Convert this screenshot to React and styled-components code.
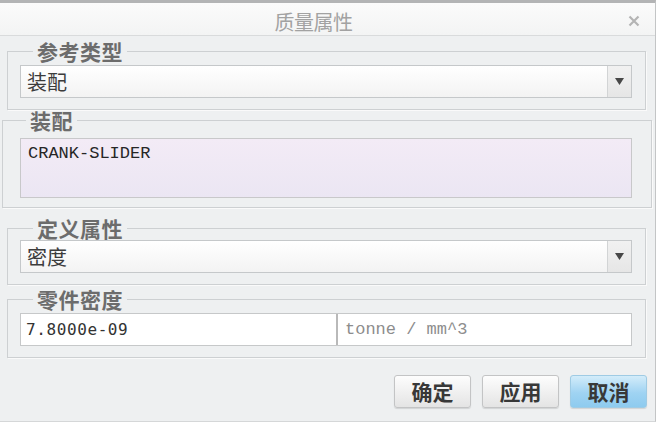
import React from 'react';
import styled, { createGlobalStyle } from 'styled-components';

const Global = createGlobalStyle`
  html, body { margin: 0; padding: 0; background: #ffffff; }
  body { font-family: "Noto Sans CJK SC", "Liberation Sans", sans-serif; }
  * { box-sizing: border-box; }
`;

const Dialog = styled.div`
  width: 656px;
  height: 422px;
  background: #eef0f1;
  border-top: 3px solid #b3b4b5;
  border-right: 1px solid #c3c5c6;
  border-bottom: 1px solid #d5d7d8;
  display: flex;
  flex-direction: column;
`;

const TitleBar = styled.div`
  position: relative;
  height: 33px;
  flex: none;
  border-bottom: 1px solid #d9dbdc;
  background: linear-gradient(#fbfbfb, #f3f4f4);
  display: flex;
  align-items: center;
  justify-content: center;
  padding: 6px 28px 0 0;
`;

const Title = styled.span`
  font-size: 20px;
  line-height: 20px;
  color: #a2a2a2;
  letter-spacing: -0.5px;
`;

const Close = styled.button`
  position: absolute;
  right: 15px;
  top: 12px;
  width: 12px;
  height: 12px;
  padding: 0;
  border: none;
  background: none;
  display: flex;
`;

const Body = styled.div`
  display: flex;
  flex-direction: column;
  padding-top: 5px;
`;

const Group = styled.fieldset`
  margin: ${(p) => p.$mt}px ${(p) => p.$mr}px 0 ${(p) => p.$ml}px;
  padding: ${(p) => p.$pt}px ${(p) => p.$pr}px ${(p) => p.$pb}px ${(p) => p.$pl}px;
  border: 1px solid #cdd0d2;
  box-shadow: 1px 1px 0 #fafafa;
  min-width: 0;
`;

const Legend = styled.legend`
  margin-left: ${(p) => p.$lm}px;
  padding: 0 4px;
  font-size: 21px;
  line-height: 20px;
  font-weight: 700;
  color: #6c6c6c;
  letter-spacing: 0.5px;
`;

const Select = styled.div`
  height: 33px;
  display: flex;
  border: 1px solid #c5c8ca;
  background: linear-gradient(#ffffff, #f3f3f3);
`;

const SelectText = styled.span`
  flex: 1;
  padding-left: 6px;
  font-size: 20px;
  line-height: 31px;
  color: #3c3c3c;
`;

const ArrowBox = styled.span`
  width: 24px;
  border-left: 1px solid #d2d4d5;
  background: linear-gradient(#f1f1f1, #e6e6e6);
  display: flex;
  align-items: center;
  justify-content: center;
`;

const ListBox = styled.div`
  height: 60px;
  border: 1px solid #c8c8ca;
  background: linear-gradient(#f3ebf6, #ebe6f3);
  padding: 5px 7px;
  font-family: "Liberation Mono", monospace;
  font-size: 17px;
  line-height: 20px;
  color: #262626;
`;

const ValueRow = styled.div`
  height: 33px;
  display: flex;
  border: 1px solid #c6c8c9;
  background: #ffffff;
`;

const Value = styled.span`
  width: 315px;
  padding-left: 5px;
  font-family: "DejaVu Sans Mono", monospace;
  font-size: 16px;
  letter-spacing: 0.6px;
  line-height: 31px;
  color: #333;
`;

const Unit = styled.span`
  flex: 1;
  border-left: 2px solid #b9b9b9;
  padding-left: 7px;
  font-family: "Liberation Mono", monospace;
  font-size: 17px;
  line-height: 31px;
  color: #8d8d8d;
`;

const Buttons = styled.div`
  display: flex;
  justify-content: flex-end;
  gap: 11px;
  margin-top: 17px;
  padding-right: 8px;
`;

const Button = styled.button`
  width: 77px;
  height: 33px;
  padding: 0;
  border: 1px solid ${(p) => (p.$primary ? '#9fcbe4' : '#c3c4c5')};
  border-radius: 3px;
  background: ${(p) =>
    p.$primary
      ? 'linear-gradient(#d3ecfa, #9fd3f2 55%, #8ecbef)'
      : 'linear-gradient(#fdfdfd, #eeeeee 60%, #e4e4e4)'};
  box-shadow: 0 1px 1px rgba(0, 0, 0, 0.12);
  font-family: "Noto Sans CJK SC", sans-serif;
  font-size: 21px;
  font-weight: 700;
  line-height: 1;
  color: #383838;
`;

const Arrow = () => (
  <svg width="9" height="7" viewBox="0 0 9 7">
    <path d="M0 0 H9 L4.5 7 Z" fill="#474747" />
  </svg>
);

export default function App() {
  return (
    <>
      <Global />
      <Dialog>
        <TitleBar>
          <Title>质量属性</Title>
          <Close aria-label="close">
            <svg width="12" height="12" viewBox="0 0 12 12">
              <path d="M1.5 1.5 L10.5 10.5 M10.5 1.5 L1.5 10.5" stroke="#b4b4b4" strokeWidth="2.2" />
            </svg>
          </Close>
        </TitleBar>
        <Body>
          <Group $mt={0} $ml={7} $mr={9} $pt={4} $pb={11} $pl={12} $pr={13}>
            <Legend $lm={13}>参考类型</Legend>
            <Select>
              <SelectText>装配</SelectText>
              <ArrowBox><Arrow /></ArrowBox>
            </Select>
          </Group>
          <Group $mt={0} $ml={2} $mr={3} $pt={8} $pb={9} $pl={17} $pr={19}>
            <Legend $lm={6}>装配</Legend>
            <ListBox>CRANK-SLIDER</ListBox>
          </Group>
          <Group $mt={10} $ml={7} $mr={9} $pt={2} $pb={11} $pl={12} $pr={13}>
            <Legend $lm={13}>定义属性</Legend>
            <Select>
              <SelectText>密度</SelectText>
              <ArrowBox><Arrow /></ArrowBox>
            </Select>
          </Group>
          <Group $mt={4} $ml={7} $mr={9} $pt={4} $pb={11} $pl={12} $pr={13}>
            <Legend $lm={13}>零件密度</Legend>
            <ValueRow>
              <Value>7.8000e-09</Value>
              <Unit>tonne / mm^3</Unit>
            </ValueRow>
          </Group>
          <Buttons>
            <Button>确定</Button>
            <Button>应用</Button>
            <Button $primary>取消</Button>
          </Buttons>
        </Body>
      </Dialog>
    </>
  );
}
